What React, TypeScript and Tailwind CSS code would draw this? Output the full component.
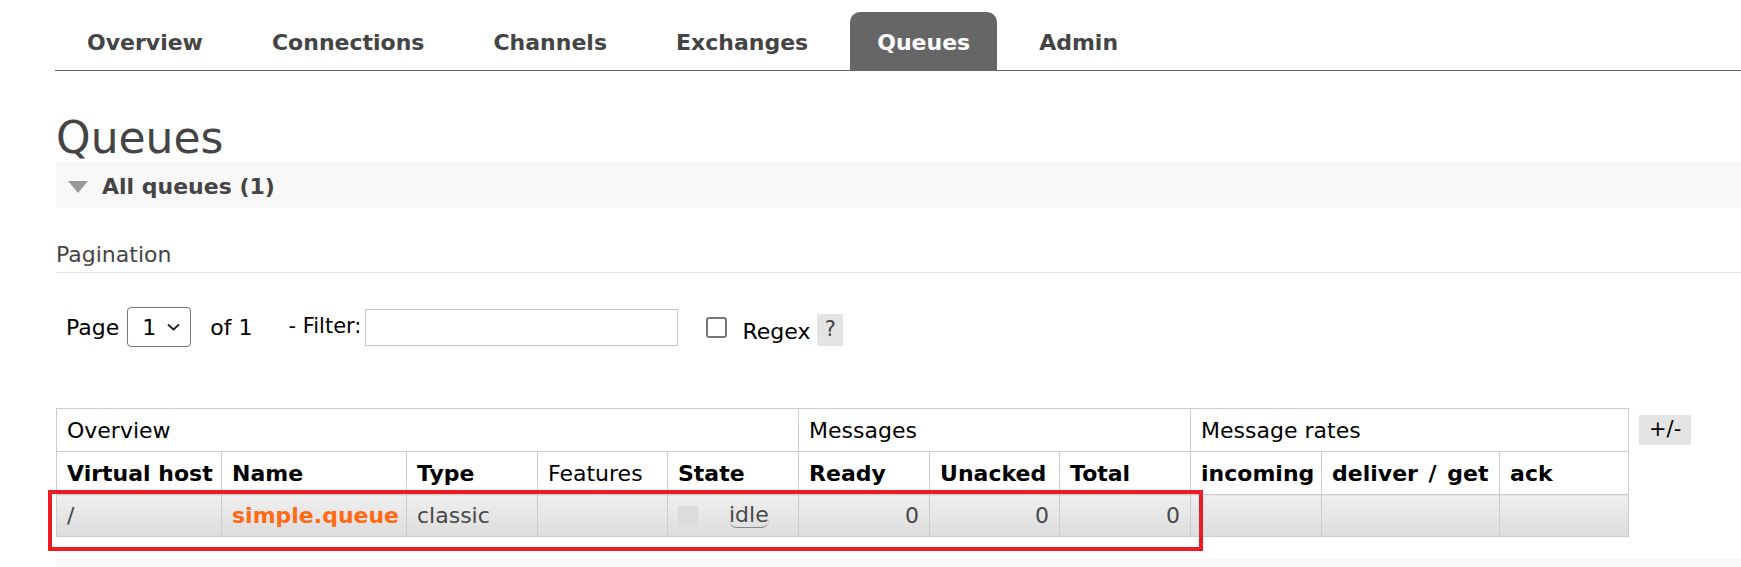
import React from 'react';

const tabs = ['Overview', 'Connections', 'Channels', 'Exchanges', 'Queues', 'Admin'];

const columns = [
  { label: 'Virtual host', width: 165, bold: true },
  { label: 'Name', width: 185, bold: true },
  { label: 'Type', width: 131, bold: true },
  { label: 'Features', width: 130, bold: false },
  { label: 'State', width: 131, bold: true },
  { label: 'Ready', width: 131, bold: true },
  { label: 'Unacked', width: 130, bold: true },
  { label: 'Total', width: 131, bold: true },
  { label: 'incoming', width: 131, bold: true },
  { label: 'deliver / get', width: 178, bold: true },
  { label: 'ack', width: 129, bold: true },
];

function Nav() {
  return (
    <div className="pt-[12px] pl-[55px]">
      <ul className="flex border-b border-[#666] pl-[5px] text-[22px]">
        {tabs.map((t) => (
          <li
            key={t}
            className={`mr-[15px] rounded-t-[10px] px-[27px] pt-[18px] pb-[14px] leading-[26px] font-bold ${
              t === 'Queues' ? 'bg-[#666] text-white' : 'text-[#444]'
            }`}
          >
            {t}
          </li>
        ))}
      </ul>
    </div>
  );
}

function Pagination() {
  return (
    <div className="mt-[34px] flex h-[40px] items-center text-[22px] text-black">
      <span className="ml-[10px]">Page</span>
      <div className="ml-[8px] flex h-[40px] w-[64px] items-center rounded-[4px] border border-[#767676] pl-[14px]">
        <span>1</span>
        <svg className="ml-[10px]" width="15" height="10" viewBox="0 0 15 10" fill="none">
          <path d="M2 2.5l5.5 5 5.5-5" stroke="#222" strokeWidth="1.8" />
        </svg>
      </div>
      <span className="ml-[19px]">of 1</span>
      <span className="ml-[36px] text-[21px]">- Filter:</span>
      <div className="ml-[4px] h-[37px] w-[313px] border border-[#c8c8c8]" />
      <span className="ml-[28px] h-[21px] w-[21px] rounded-[3px] border-2 border-[#767676]" />
      <span className="ml-[15px] mt-[8px]">Regex</span>
      <span className="ml-[7px] mt-[6px] flex h-[32px] w-[26px] items-center justify-center bg-[#e4e4e4] text-[21px] text-[#444]">?</span>
    </div>
  );
}

function QueueTable() {
  const th = 'border border-[#ccc] px-[10px] h-[43px] text-left align-middle text-black';
  const td = 'border border-[#ccc] px-[10px] h-[42px] align-middle bg-gradient-to-b from-[#f0f0f0] to-[#dcdcdc]';
  return (
    <div className="mt-[61px] flex items-start">
      <table className="table-fixed border-collapse text-[22px]" style={{ width: 1573 }}>
        <colgroup>
          {columns.map((c) => (
            <col key={c.label} style={{ width: c.width }} />
          ))}
        </colgroup>
        <thead>
          <tr>
            <th colSpan={5} className={`${th} font-normal`}>Overview</th>
            <th colSpan={3} className={`${th} font-normal`}>Messages</th>
            <th colSpan={3} className={`${th} font-normal`}>Message rates</th>
          </tr>
          <tr>
            {columns.map((c) => (
              <th key={c.label} className={`${th} whitespace-nowrap ${c.bold ? 'font-bold' : 'font-normal'}`}>
                {c.label === 'deliver / get' ? (
                  <>
                    deliver <span className="mx-[3px]">/</span> get
                  </>
                ) : (
                  c.label
                )}
              </th>
            ))}
          </tr>
        </thead>
        <tbody>
          <tr className="text-[#484848]">
            <td className={td}>/</td>
            <td className={`${td} font-bold text-[#ff6a13]`}>simple.queue</td>
            <td className={td}>classic</td>
            <td className={td}></td>
            <td className={td}>
              <div className="flex items-center">
                <span className="h-[20px] w-[20px] bg-[#dcdcdc]" />
                <span className="ml-[31px] rounded-b-[8px] border-b border-[#888] leading-[24px]">idle</span>
              </div>
            </td>
            <td className={`${td} text-right`}>0</td>
            <td className={`${td} text-right`}>0</td>
            <td className={`${td} text-right`}>0</td>
            <td className={td}></td>
            <td className={td}></td>
            <td className={td}></td>
          </tr>
        </tbody>
      </table>
      <span className="ml-[10px] mt-[7px] flex h-[30px] w-[52px] items-center justify-center bg-[#e4e4e4] text-black">
        +/-
      </span>
    </div>
  );
}

export default function App() {
  return (
    <div className="relative h-[567px] overflow-hidden bg-white font-['DejaVu_Sans',sans-serif] text-[21px] text-[#444]">
      <Nav />
      <main className="pl-[56px]">
        <h1 className="mt-[45px] text-[44px] leading-[44px] text-[#444]">Queues</h1>
        <div className="mt-[2px] flex h-[46px] items-center bg-[#f8f8f8]">
          <span className="ml-[12px] mt-[4px] h-0 w-0 border-x-[10px] border-t-[12px] border-x-transparent border-t-[#999]" />
          <span className="ml-[14px] mt-[2px] text-[22px] font-bold">All queues (1)</span>
        </div>
        <h3 className="mt-[34px] border-b border-[#e4e4e4] pb-[4px] text-[22px] leading-[26px]">Pagination</h3>
        <Pagination />
        <QueueTable />
        <div className="mt-[22px] h-[40px] bg-[#f8f8f8]" />
      </main>
      <div className="pointer-events-none absolute left-[48px] top-[490px] h-[61px] w-[1155px] border-[4px] border-[#ed1c24]" />
    </div>
  );
}
